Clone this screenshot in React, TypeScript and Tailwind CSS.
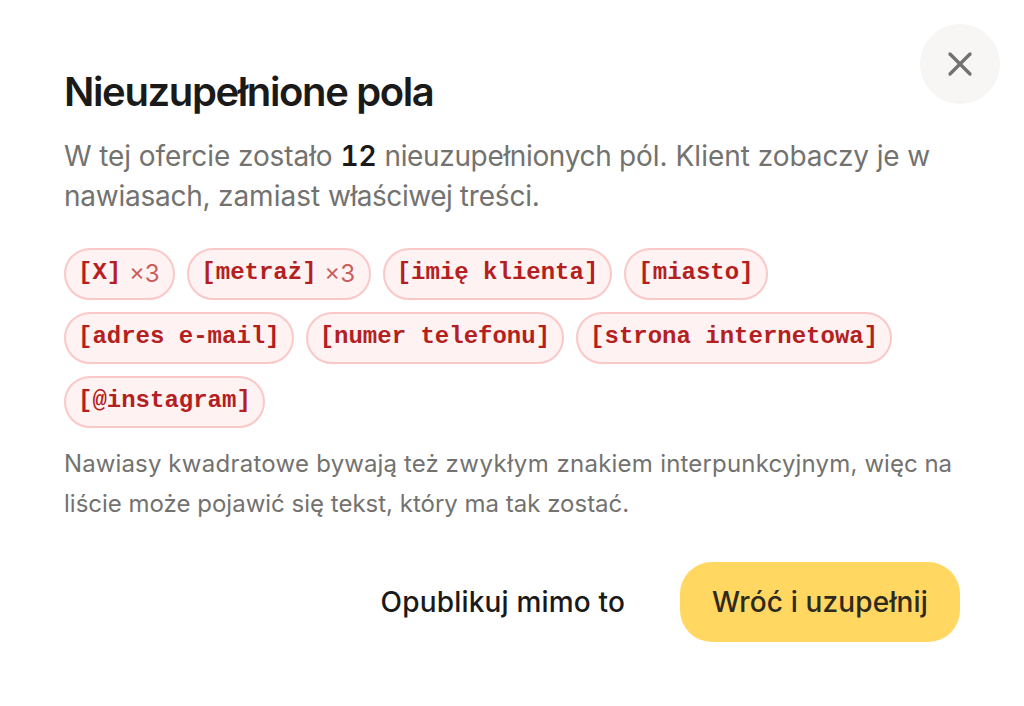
import { X } from "lucide-react";

const fields = [
  { label: "[X]", count: 3 },
  { label: "[metraż]", count: 3 },
  { label: "[imię klienta]", count: 1 },
  { label: "[miasto]", count: 1 },
  { label: "[adres e-mail]", count: 1 },
  { label: "[numer telefonu]", count: 1 },
  { label: "[strona internetowa]", count: 1 },
  { label: "[@instagram]", count: 1 },
];

export default function App() {
  return (
    <div
      role="dialog"
      aria-labelledby="dialog-title"
      className="relative h-[706px] w-[1024px] overflow-hidden bg-white px-16 pt-16 font-['Inter',sans-serif] text-[#1a1a1a]"
    >
      <button
        aria-label="Zamknij"
        className="absolute top-6 right-6 flex size-20 items-center justify-center rounded-full bg-[#f7f6f5] text-[#73726f]"
      >
        <X size={40} strokeWidth={2} />
      </button>

      <h2 id="dialog-title" className="text-[40px] leading-[56px] font-semibold tracking-[-1.37px]">
        Nieuzupełnione pola
      </h2>

      <p className="mt-4 text-[28px] leading-10 text-[#73726f]">
        <span className="tracking-[-0.08px]">W tej ofercie zostało </span>
        <strong className="font-semibold text-[#1a1a1a] tabular-nums">12</strong>{" "}
        <span className="tracking-[-0.35px]">nieuzupełnionych </span>
        pól. Klient <span className="tracking-[-0.1px]">zobaczy je w </span>
        <span className="tracking-[-0.25px]">nawiasach, </span>
        zamiast <span className="tracking-[-0.45px]">właściwej </span>
        <span className="tracking-[-0.2px]">treści.</span>
      </p>

      <ul className="mt-8 flex flex-wrap gap-3">
        {fields.map((field) => (
          <li
            key={field.label}
            className="flex h-[52px] items-center gap-2 rounded-full border-2 border-[#fbc8c8] bg-[#fef2f2] px-3 text-2xl text-[#b42020]"
          >
            <span className="-mt-0.5 font-['Liberation_Mono',monospace] font-bold">{field.label}</span>
            {field.count > 1 && <span className="pr-px tabular-nums opacity-70">×{field.count}</span>}
          </li>
        ))}
      </ul>

      <p className="mt-4 text-2xl leading-10 text-[#73726f]">
        <span className="tracking-[0.12px]">Nawiasy </span>
        <span className="tracking-[0.27px]">kwadratowe </span>
        <span className="tracking-[0.1px]">bywają też </span>
        <span className="tracking-[0.5px]">zwykłym </span>
        <span className="tracking-[0.25px]">znakiem </span>
        <span className="tracking-[0.18px]">interpunkcyjnym, </span>
        więc na liście może pojawić się tekst, który ma tak zostać.
      </p>

      <div className="mt-[38px] flex justify-end gap-6 text-[28px] font-medium">
        <button className="h-20 rounded-[32px] pr-[31px] pl-8 tracking-[0.18px]">Opublikuj mimo to</button>
        <button className="h-20 w-[280px] rounded-[32px] bg-[#ffd761] tracking-[0.15px] text-[#2d2a20]">
          Wróć i uzupełnij
        </button>
      </div>
    </div>
  );
}
